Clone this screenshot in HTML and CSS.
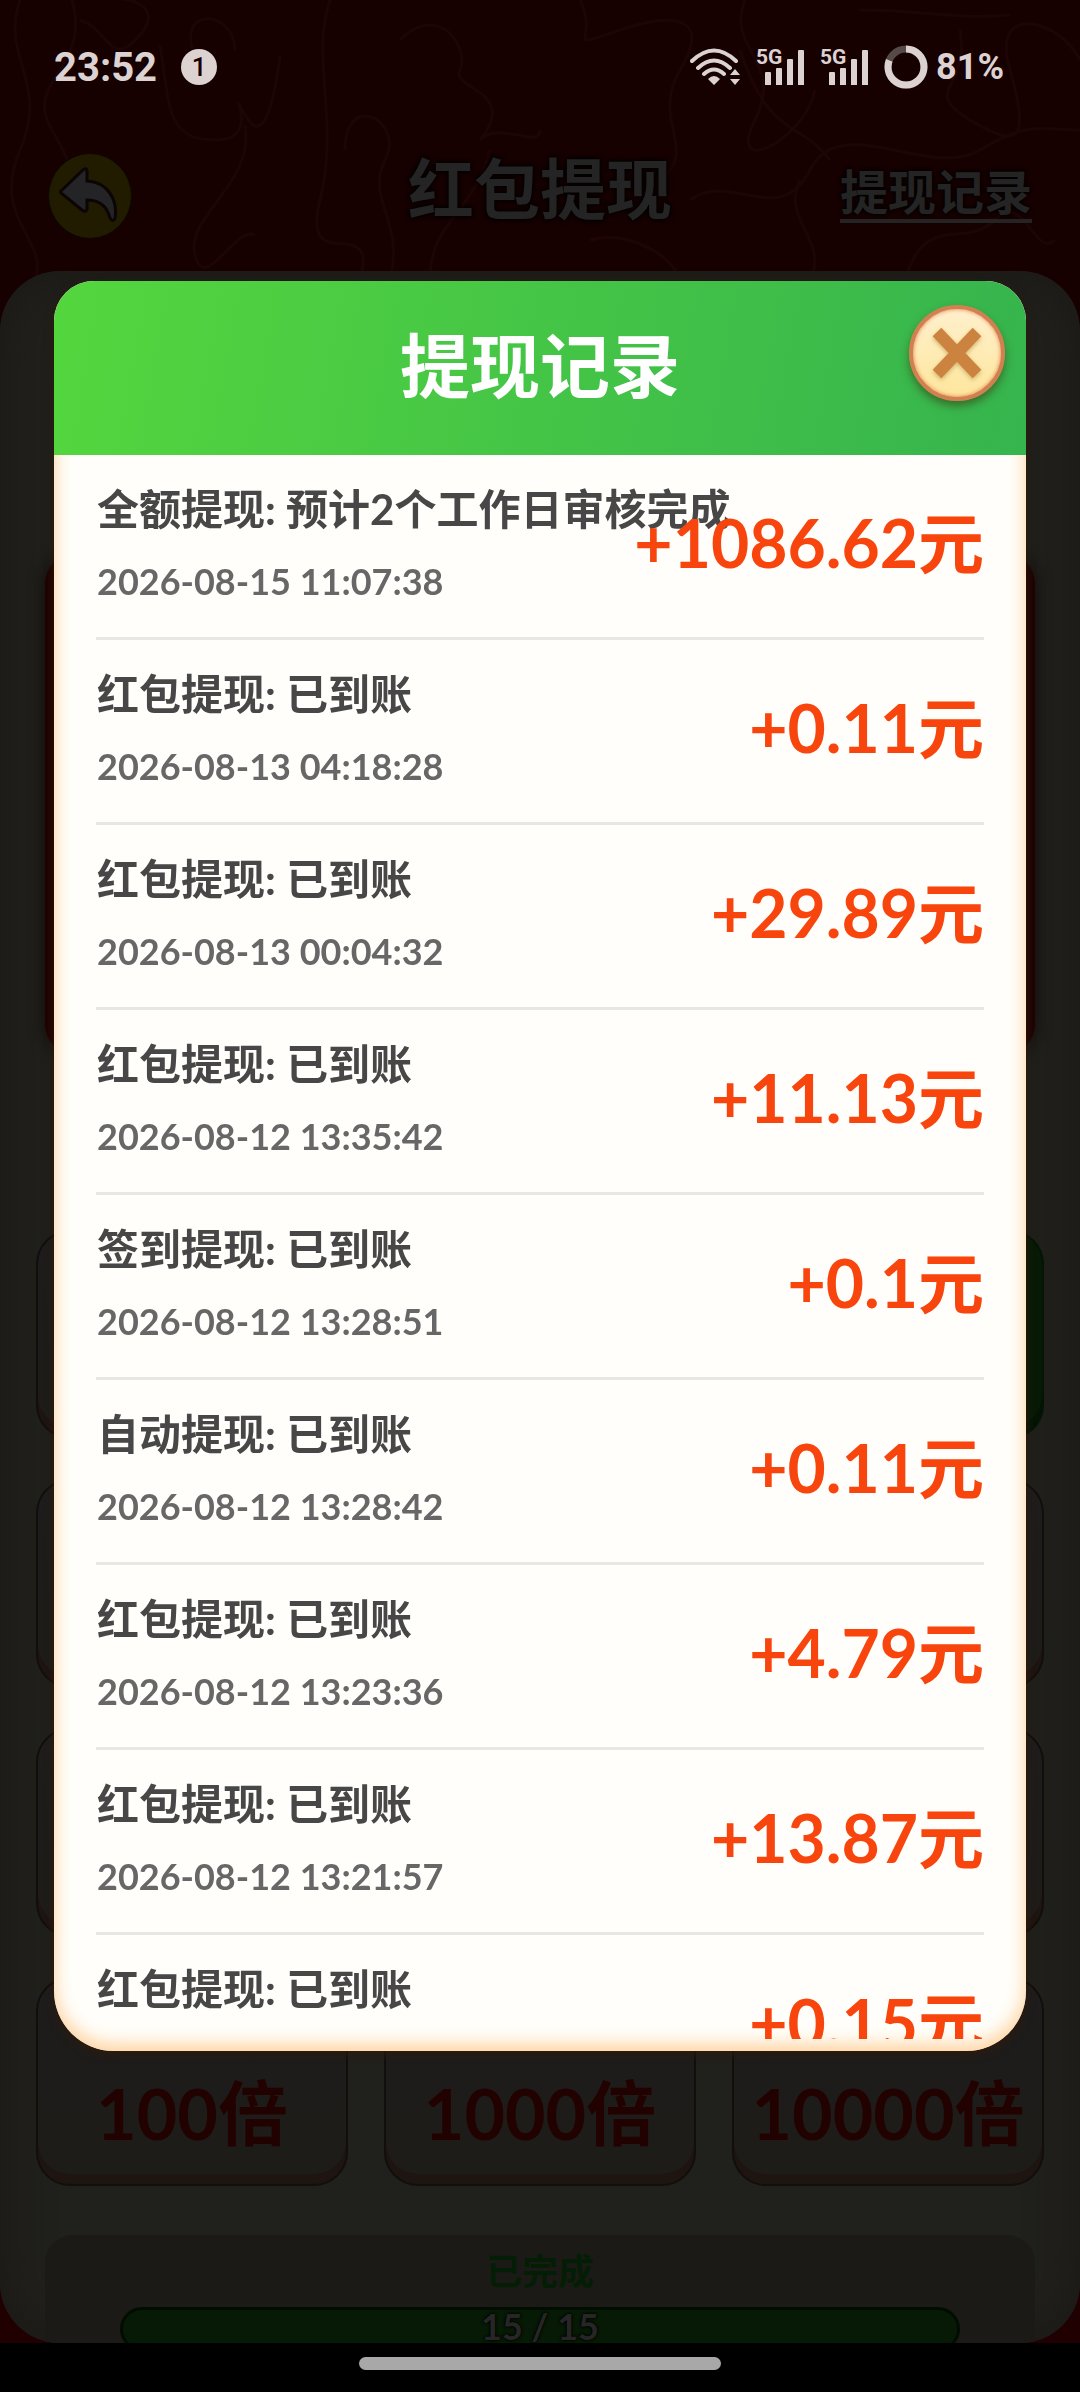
FILE: index.html
```html
<!DOCTYPE html>
<html lang="zh-CN">
  <head>
    <meta charset="UTF-8">
    <meta name="viewport" content="width=device-width, initial-scale=1">
    <title>提现记录</title>
    <link rel="stylesheet" href="styles.css">
  </head>
  <body>

    <div class="page">
      <svg class="pattern" viewBox="0 0 1080 280" preserveAspectRatio="none" aria-hidden="true">
        <path d="M20 0C0 60 50 80 20 150S50 240 35 280M72 0c20 70-50 80-20 130s20 60 45 70M80 20c30 10 30 50 60 15s-30-40-30-35M160 45c10 60 5 95 55 95s10-60 30-25 30-20 35-60M205 75c-45-70 30-70 30-25M330 0c-20 60 10 120-10 200s60 10 40 80M245 125c10 60-60 90-50 130s40-30 60-20M400 40c40-40 70 10 60 30s60 20 20 70c20-20 60 10 60-10M345 150c0-60 60-30 40 10s20 60 5 120M430 280c0-60 40-60 60-130"/>
        <path d="M580 0c20 40-20 50 40 30s90-10 60 40 20 80-20 110M745 0c-20 50 40 60 10 120s50 20 60-30M740 50c30 90 60 70 90 110M860 10c60 0 100 10 150 5M960 30c10 60-40 60 10 90s60 20 40-50 50-50 70-10M690 200c40-30 90 30 120-30s120 10 170-20 60-20 100-20M590 240c30-10 80 10 90 40M800 180c-20 40 30 60 10 100M905 280c20-70 60-30 90-60s40 40 60 20"/>
      </svg>

      <div class="status-bar">
        <span class="time">23:52</span>
        <span class="badge">1</span>
        <div class="status-icons">
          <svg class="wifi" width="52" height="38" viewBox="0 0 52 38" aria-hidden="true">
            <path class="arc" d="M2 13q22-21 44 0M8 20q16-15 32 0M14 26q10-9 20 0"/>
            <path class="fill" d="M18 31q6-6 12 0l-6 6zM40 27l5-6 5 6zM40 31h10l-5 6z"/>
          </svg>
          <svg class="signal" width="50" height="42" viewBox="0 -4 50 42" aria-hidden="true">
            <text x="0" y="16">5G</text>
            <path class="fill" d="M9 25a1 1 0 0 1 1-1h4a1 1 0 0 1 1 1v12H9zM20 21a1 1 0 0 1 1-1h4a1 1 0 0 1 1 1v16h-6zM31 12a1 1 0 0 1 1-1h4a1 1 0 0 1 1 1v25h-6zM42 3a1 1 0 0 1 1-1h4a1 1 0 0 1 1 1v34h-6z"/>
          </svg>
          <svg class="signal" width="50" height="42" viewBox="0 -4 50 42" aria-hidden="true">
            <text x="0" y="16">5G</text>
            <path class="fill" d="M9 25a1 1 0 0 1 1-1h4a1 1 0 0 1 1 1v12H9zM20 21a1 1 0 0 1 1-1h4a1 1 0 0 1 1 1v16h-6zM31 12a1 1 0 0 1 1-1h4a1 1 0 0 1 1 1v25h-6zM42 3a1 1 0 0 1 1-1h4a1 1 0 0 1 1 1v34h-6z"/>
          </svg>
          <svg class="battery" width="44" height="44" viewBox="0 0 44 44" aria-hidden="true">
            <circle class="track" cx="22" cy="22" r="18"/>
            <circle class="level" cx="22" cy="22" r="18" pathLength="100" stroke-dasharray="81 19" transform="rotate(-90 22 22)"/>
          </svg>
          <span class="percent">81%</span>
        </div>
      </div>

      <div class="top-bar">
        <button class="back" type="button" aria-label="返回">
          <svg width="62" height="58" viewBox="0 0 62 58" aria-hidden="true">
            <path d="M2 24L24 3q4-3 4 1v10c20 1 31 18 28 37q-2 5-5 0c-3-12-11-18-23-18v9q-1 4-5 1L2 26q-1-1 0-2z"/>
          </svg>
        </button>
        <h1 class="page-title">红包提现</h1>
        <a class="record-link" href="#records">提现记录</a>
      </div>

      <div class="panel">
        <div class="balance"></div>
        <div class="cards">
          <div class="card"></div>
          <div class="card"></div>
          <div class="card on"></div>
          <div class="card"></div>
          <div class="card"></div>
          <div class="card"></div>
          <div class="card"></div>
          <div class="card"></div>
          <div class="card"></div>
          <div class="card">100倍</div>
          <div class="card">1000倍</div>
          <div class="card">10000倍</div>
        </div>
        <div class="task">
          <p class="task-state">已完成</p>
          <div class="bar">15 / 15</div>
        </div>
      </div>

      <div class="nav-bar"><span class="pill"></span></div>
    </div>

    <div class="mask">
      <div class="dialog" id="records" role="dialog" aria-labelledby="dialog-title">
        <div class="dialog-head">
          <h2 id="dialog-title">提现记录</h2>
          <button class="close" type="button" aria-label="关闭">
            <svg width="50" height="52" viewBox="0 0 50 52" aria-hidden="true">
              <path d="M5 5l40 42M45 5L5 47"/>
            </svg>
          </button>
        </div>
        <ul class="list">
          <li class="row">
            <div class="info">
              <p class="name">全额提现: 预计2个工作日审核完成</p>
              <p class="date">2026-08-15 11:07:38</p>
            </div>
            <span class="amount">+1086.62元</span>
          </li>
          <li class="row">
            <div class="info">
              <p class="name">红包提现: 已到账</p>
              <p class="date">2026-08-13 04:18:28</p>
            </div>
            <span class="amount">+0.11元</span>
          </li>
          <li class="row">
            <div class="info">
              <p class="name">红包提现: 已到账</p>
              <p class="date">2026-08-13 00:04:32</p>
            </div>
            <span class="amount">+29.89元</span>
          </li>
          <li class="row">
            <div class="info">
              <p class="name">红包提现: 已到账</p>
              <p class="date">2026-08-12 13:35:42</p>
            </div>
            <span class="amount">+11.13元</span>
          </li>
          <li class="row">
            <div class="info">
              <p class="name">签到提现: 已到账</p>
              <p class="date">2026-08-12 13:28:51</p>
            </div>
            <span class="amount">+0.1元</span>
          </li>
          <li class="row">
            <div class="info">
              <p class="name">自动提现: 已到账</p>
              <p class="date">2026-08-12 13:28:42</p>
            </div>
            <span class="amount">+0.11元</span>
          </li>
          <li class="row">
            <div class="info">
              <p class="name">红包提现: 已到账</p>
              <p class="date">2026-08-12 13:23:36</p>
            </div>
            <span class="amount">+4.79元</span>
          </li>
          <li class="row">
            <div class="info">
              <p class="name">红包提现: 已到账</p>
              <p class="date">2026-08-12 13:21:57</p>
            </div>
            <span class="amount">+13.87元</span>
          </li>
          <li class="row">
            <div class="info">
              <p class="name">红包提现: 已到账</p>
            </div>
            <span class="amount">+0.15元</span>
          </li>
        </ul>
      </div>
    </div>

  </body>
</html>
```
FILE: styles.css
```css
* {
  margin: 0;
  padding: 0;
  box-sizing: border-box;
}

body {
  font-family: Lato, "Noto Sans CJK SC", sans-serif;
  font-weight: 700;
  background: #000;
}

button {
  border: none;
  cursor: pointer;
}

.page {
  position: relative;
  display: flex;
  flex-direction: column;
  height: 100vh;
  overflow: hidden;
  background: linear-gradient(#160000 280px, #200000);
}

.pattern {
  position: absolute;
  top: 0;
  left: 0;
  width: 100%;
  height: 280px;
  fill: none;
  stroke: #1e0505;
  stroke-width: 3;
}

/* status bar */
.status-bar {
  position: relative;
  display: flex;
  align-items: center;
  height: 134px;
  padding: 0 76px 0 54px;
  font-family: Roboto, sans-serif;
  color: #dcd2d1;
}

.time {
  font-size: 40px;
}

.badge {
  width: 36px;
  height: 36px;
  margin-left: 24px;
  border-radius: 50%;
  background: #dcd2d1;
  color: #160000;
  font-size: 26px;
  font-weight: 500;
  line-height: 36px;
  text-align: center;
}

.status-icons {
  display: flex;
  align-items: center;
  gap: 14px;
  margin-left: auto;
}

.status-icons .fill {
  fill: #dcd2d1;
}

.wifi .arc {
  fill: none;
  stroke: #dcd2d1;
  stroke-width: 4;
  stroke-linecap: round;
}

.signal {
  margin-top: -4px;
}

.signal text {
  fill: #dcd2d1;
  font-size: 21px;
}

.battery {
  fill: none;
  stroke-width: 7;
}

.battery .track {
  stroke: #564a49;
}

.battery .level {
  stroke: #dcd2d1;
}

.percent {
  margin-left: -6px;
  font-size: 36px;
}

/* top bar */
.top-bar {
  position: relative;
  display: grid;
  grid-template-columns: 1fr auto 1fr;
  align-items: start;
  height: 137px;
  padding: 19px 48px 0;
}

.back {
  display: flex;
  align-items: center;
  justify-content: center;
  width: 84px;
  height: 86px;
  border: 1px solid #0c0900;
  border-radius: 50%;
  background: #211b00;
}

.back svg {
  fill: #242427;
  stroke: #0c0506;
  stroke-width: 3;
}

.page-title {
  color: #242424;
  font-size: 66px;
  line-height: 72px;
  text-shadow: 0 0 5px #000, 0 0 5px #000;
}

.record-link {
  justify-self: end;
  margin-top: 12px;
  border-bottom: 4px solid #242424;
  color: #242424;
  font-size: 48px;
  line-height: 54px;
  text-decoration: none;
  text-shadow: 0 0 4px #000, 0 0 4px #000;
}

/* panel */
.panel {
  position: relative;
  flex: 1;
  min-height: 0;
  overflow: hidden;
  border-radius: 60px;
  background: #20201c;
  box-shadow: inset 0 0 50px #1b1814;
}

.balance {
  height: 500px;
  margin: 283px 45px 176px;
  border-radius: 30px;
  background: #1e0200;
  box-shadow: 0 0 16px #140c0a;
}

.cards {
  display: grid;
  grid-template-columns: repeat(3, 1fr);
  gap: 40px 36px;
  margin: 0 36px;
}

.card {
  height: 209px;
  padding-top: 84px;
  border: 2px solid #120e0b;
  border-radius: 34px;
  background: linear-gradient(#1e1c1c, #1d1c18);
  box-shadow: inset 0 -10px 0 #1e1410;
  color: #220200;
  font-size: 70px;
  line-height: 100px;
  text-align: center;
}

.card.on {
  border-color: #031404;
  background: #071a05;
  box-shadow: inset 0 -10px 0 #031404;
}

.task {
  height: 200px;
  margin: 49px 45px 0;
  padding: 10px 75px;
  border-radius: 28px;
  background: #1c1a17;
  text-align: center;
}

.task-state {
  color: #041e05;
  font-size: 36px;
  line-height: 52px;
}

.bar {
  height: 44px;
  margin-top: 10px;
  border: 3px solid #020d02;
  border-radius: 22px;
  background: #071a05;
  color: #262626;
  font-size: 36px;
  line-height: 32px;
  text-shadow: 0 0 3px #000, 0 0 3px #000;
}

.nav-bar {
  display: flex;
  justify-content: center;
  height: 49px;
  padding-top: 14px;
  background: #000;
}

.pill {
  width: 362px;
  height: 13px;
  border-radius: 7px;
  background: #a8a8a8;
}

/* records dialog */
.mask {
  position: fixed;
  top: 0;
  right: 0;
  bottom: 0;
  left: 0;
  display: flex;
  padding: 281px 5% 341px;
}

.dialog {
  display: flex;
  flex: 1;
  flex-direction: column;
  min-width: 0;
  padding-bottom: 12px;
  border-radius: 40px 40px 60px 60px;
  background: #fffefa;
  box-shadow: inset 0 -6px 18px #ffd09a, 0 3px 10px #2e1a0c;
}

.dialog-head {
  position: relative;
  flex: none;
  height: 174px;
  border-radius: 40px 40px 0 0;
  background: linear-gradient(100deg, #54d63e, #36b44e);
}

.dialog-head h2 {
  color: #fff;
  font-size: 70px;
  line-height: 170px;
  text-align: center;
}

.close {
  position: absolute;
  top: 24px;
  right: 21px;
  display: flex;
  align-items: center;
  justify-content: center;
  width: 96px;
  height: 96px;
  border: 4px solid #d18150;
  border-radius: 50%;
  background: linear-gradient(#fff0cd, #fde69c);
  box-shadow: 0 5px 8px rgba(60, 60, 20, .6), inset 0 0 4px #e8784c;
}

.close svg {
  stroke: #cd8340;
  stroke-width: 12;
  filter: drop-shadow(0 2px 2px rgba(180, 140, 60, .6));
}

.list {
  flex: 1;
  min-height: 0;
  padding: 0 42px;
  overflow: hidden;
  list-style: none;
}

.row {
  display: flex;
  justify-content: space-between;
  height: 185px;
  border-bottom: 3px solid #e8e7e5;
  white-space: nowrap;
}

.info {
  flex: 1;
  min-width: 0;
  padding: 24px 0 0 1px;
}

.name {
  color: #474747;
  font-size: 42px;
  line-height: 60px;
}

.date {
  margin-top: 14px;
  color: #676767;
  font-size: 36px;
  line-height: 56px;
}

.amount {
  position: relative;
  padding-top: 38px;
  color: #f7450d;
  font-size: 66px;
  line-height: 100px;
}
```
